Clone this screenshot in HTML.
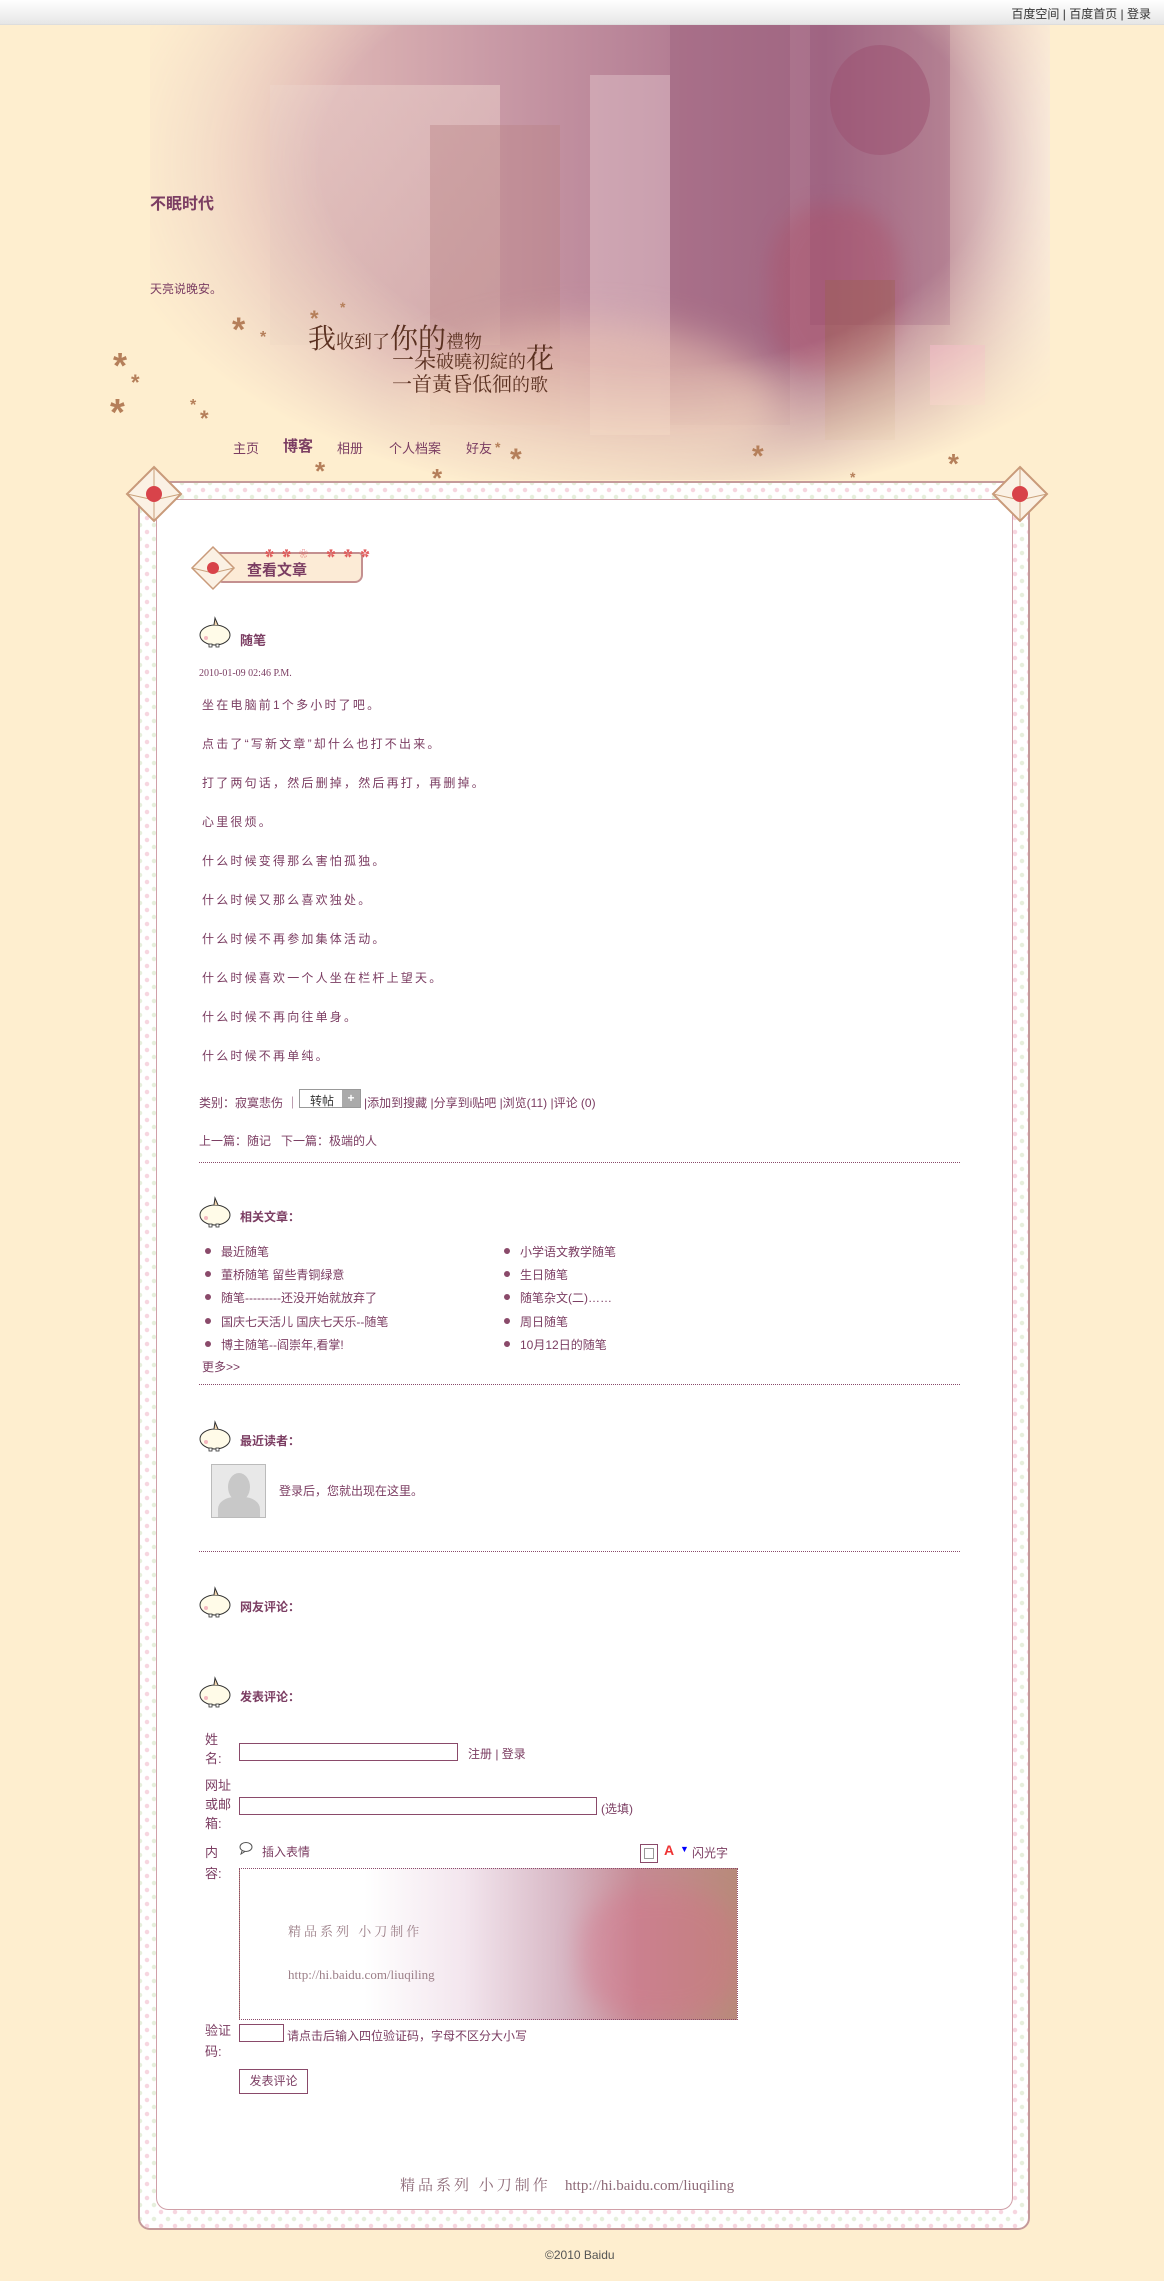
<!DOCTYPE html>
<html><head><meta charset="utf-8">
<style>
*{margin:0;padding:0;box-sizing:border-box}
body{width:1164px;height:2281px;background:#feeecf;position:relative;overflow:hidden;font-family:"Liberation Sans","Noto Sans CJK SC",sans-serif;color:#7b3d62;font-size:12px}
.a{position:absolute;white-space:nowrap}
#top{position:absolute;left:0;top:0;width:1164px;height:25px;background:linear-gradient(#fff,#e6e6e6);border-bottom:1px solid #ddd}
.star{position:absolute;color:#b57f5a;font-family:"Liberation Sans",sans-serif;font-weight:bold;line-height:1}
.hd{position:absolute;font-weight:bold;font-size:12px;color:#7b3d62}
.p{position:absolute;left:202px;font-size:12px;letter-spacing:2.2px;color:#7b3d62}
.dot{position:absolute;left:199px;width:761px;border-top:1px dotted #8a4a6a}
.li{position:absolute;font-size:12px}
.li:before{content:"";position:absolute;left:-16px;top:5px;width:6px;height:6px;border-radius:50%;background:#8a4a6a}
input.in{position:absolute;border:1px solid #8a4a6a;background:#fff;height:18px}
#art{position:absolute;left:150px;top:25px;width:900px;height:455px;
background:linear-gradient(90deg,#f2d9c8 0%,#e0b9b6 18%,#c99aa6 38%,#b47e94 58%,#a8708a 75%,#c497a0 88%,#f6e6dc 100%);
-webkit-mask-image:radial-gradient(ellipse 62% 75% at 56% 30%,#000 60%,transparent 100%);
mask-image:radial-gradient(ellipse 62% 75% at 56% 30%,#000 60%,transparent 100%)}
.pl{position:absolute;white-space:nowrap;font-family:'Liberation Serif','Noto Serif CJK SC',serif;color:#5a3020;line-height:1}
</style></head><body>
<div id="top"></div>
<div class="a" style="right:13px;top:5px;font-size:12px;color:#333">百度空间 | 百度首页 | 登录</div>

<div id="art">
<div class="a" style="left:120px;top:60px;width:230px;height:260px;background:linear-gradient(#e6c9c6,#d7b3b0);opacity:.6"></div>
<div class="a" style="left:280px;top:100px;width:130px;height:300px;background:#b98384;opacity:.4"></div>
<div class="a" style="left:440px;top:50px;width:80px;height:360px;background:#e5c8cf;opacity:.45"></div>
<div class="a" style="left:520px;top:0;width:120px;height:400px;background:#8e5070;opacity:.3"></div>
<div class="a" style="left:660px;top:0;width:140px;height:300px;background:#8c4a70;opacity:.3"></div>
<div class="a" style="left:680px;top:20px;width:100px;height:110px;border-radius:50%;background:#9c4f70;opacity:.5"></div>
<div class="a" style="left:250px;top:300px;width:380px;height:160px;border-radius:50%;background:#eec8b4;opacity:.6;filter:blur(20px)"></div>
<div class="a" style="left:620px;top:180px;width:130px;height:170px;border-radius:40%;background:#b14c63;opacity:.35;filter:blur(10px)"></div>
<div class="a" style="left:675px;top:255px;width:70px;height:160px;background:#9a6250;opacity:.4"></div>
<div class="a" style="left:780px;top:320px;width:55px;height:60px;background:#e4a0be;opacity:.7"></div>
</div>

<div class="a" style="left:150px;top:190px;font-size:16px;font-weight:bold;color:#7b3d62">不眠时代</div>
<div class="a" style="left:150px;top:280px;font-size:12px;color:#7b3d62">天亮说晚安。</div>
<div class="pl" style="left:308px;top:326px"><span style="font-size:28px">我</span><span style="font-size:18px">收到了</span><span style="font-size:28px">你的</span><span style="font-size:18px">禮物</span></div>
<div class="pl" style="left:392px;top:346px"><span style="font-size:22px">一朵</span><span style="font-size:18px">破曉初綻的</span><span style="font-size:28px">花</span></div>
<div class="pl" style="left:392px;top:375px;font-size:20px">一首黃昏低徊<span style="font-size:18px">的歌</span></div>

<div class="a" style="left:233px;top:438px;font-size:13px">主页</div>
<div class="a" style="left:283px;top:435px;font-size:15px;font-weight:bold">博客</div>
<div class="a" style="left:337px;top:438px;font-size:13px">相册</div>
<div class="a" style="left:389px;top:438px;font-size:13px">个人档案</div>
<div class="a" style="left:466px;top:438px;font-size:13px">好友</div>

<div class="star" style="left:232px;top:313px;font-size:34px">*</div>
<div class="star" style="left:260px;top:330px;font-size:16px">*</div>
<div class="star" style="left:113px;top:348px;font-size:36px">*</div>
<div class="star" style="left:131px;top:372px;font-size:22px">*</div>
<div class="star" style="left:110px;top:394px;font-size:38px">*</div>
<div class="star" style="left:190px;top:398px;font-size:16px">*</div>
<div class="star" style="left:200px;top:408px;font-size:22px">*</div>
<div class="star" style="left:310px;top:308px;font-size:22px">*</div>
<div class="star" style="left:340px;top:300px;font-size:14px">*</div>
<div class="star" style="left:510px;top:445px;font-size:30px">*</div>
<div class="star" style="left:495px;top:440px;font-size:14px">*</div>
<div class="star" style="left:315px;top:458px;font-size:26px">*</div>
<div class="star" style="left:432px;top:465px;font-size:26px">*</div>
<div class="star" style="left:345px;top:497px;font-size:20px">*</div>
<div class="star" style="left:752px;top:442px;font-size:30px">*</div>
<div class="star" style="left:850px;top:470px;font-size:14px">*</div>
<div class="star" style="left:840px;top:480px;font-size:22px">*</div>
<div class="star" style="left:948px;top:450px;font-size:28px">*</div>
<div class="star" style="left:922px;top:490px;font-size:18px">*</div>

<div class="a" style="left:138px;top:481px;width:892px;height:1749px;border:2px solid #c59a9a;border-radius:0 0 12px 12px;background:#fff;background-image:radial-gradient(circle,#f7d6e0 2px,transparent 2.5px),radial-gradient(circle,#e6efdc 2px,transparent 2.5px);background-size:14px 14px;background-position:0 0,7px 7px"></div>
<div class="a" style="left:156px;top:499px;width:857px;height:1711px;border:1px solid #d0a0a8;border-radius:0 0 12px 12px;background:#fff"></div>
<svg class="a" style="left:124px;top:464px" width="60" height="60" viewBox="0 0 60 60"><path d="M30 3 L57 30 L30 57 L3 30Z" fill="#fbf1e4" stroke="#c99a7a" stroke-width="2"/><path d="M3 30 L30 36 L57 30 M30 3 L30 57" stroke="#c9a07a" fill="none"/><circle cx="30" cy="30" r="8" fill="#d8434a"/></svg>
<svg class="a" style="left:990px;top:464px" width="60" height="60" viewBox="0 0 60 60"><path d="M30 3 L57 30 L30 57 L3 30Z" fill="#fbf1e4" stroke="#c99a7a" stroke-width="2"/><path d="M3 30 L30 36 L57 30 M30 3 L30 57" stroke="#c9a07a" fill="none"/><circle cx="30" cy="30" r="8" fill="#d8434a"/></svg>

<div class="a" style="left:215px;top:552px;width:148px;height:31px;border:2px solid #c49090;border-radius:0 4px 8px 8px;background:#fcebd6"></div>
<svg class="a" style="left:190px;top:545px" width="46" height="46" viewBox="0 0 46 46"><path d="M23 2 L44 23 L23 44 L2 23Z" fill="#fbf1e4" stroke="#c99a7a" stroke-width="1.5"/><path d="M2 23 L23 28 L44 23" stroke="#c9a07a" fill="none"/><circle cx="23" cy="23" r="6" fill="#d8434a"/></svg>
<div class="a" style="left:265px;top:547px;font-size:9px;color:#e05a5a;letter-spacing:8px">✿✿❀ ✿✿✿</div>
<div class="a" style="left:247px;top:559px;font-size:15px;font-weight:bold;color:#7b3d62">查看文章</div>

<svg width="0" height="0" style="position:absolute"><defs><g id="rb"><ellipse cx="16" cy="19" rx="15" ry="10" fill="#fffbe8" stroke="#333" stroke-width="1"/><path d="M15 9 L16 2 L19 9" fill="#f4d7b0" stroke="#333" stroke-width="1"/><circle cx="7" cy="22" r="2" fill="#f5b8c0"/><rect x="10" y="28" width="3" height="3" fill="#fff" stroke="#333" stroke-width=".8"/><rect x="17" y="28" width="3" height="3" fill="#fff" stroke="#333" stroke-width=".8"/></g></defs></svg>
<svg class="a" style="left:199px;top:616px" width="34" height="34"><use href="#rb"/></svg>
<div class="hd" style="left:240px;top:630px;font-size:13px">随笔</div>
<div class="a" style="left:199px;top:668px;font-size:10px;font-family:'Liberation Serif',serif">2010-01-09 02:46 P.M.</div>

<div class="p" style="top:696px">坐在电脑前1个多小时了吧。</div>
<div class="p" style="top:735px">点击了“写新文章”却什么也打不出来。</div>
<div class="p" style="top:774px">打了两句话，然后删掉，然后再打，再删掉。</div>
<div class="p" style="top:813px">心里很烦。</div>
<div class="p" style="top:852px">什么时候变得那么害怕孤独。</div>
<div class="p" style="top:891px">什么时候又那么喜欢独处。</div>
<div class="p" style="top:930px">什么时候不再参加集体活动。</div>
<div class="p" style="top:969px">什么时候喜欢一个人坐在栏杆上望天。</div>
<div class="p" style="top:1008px">什么时候不再向往单身。</div>
<div class="p" style="top:1047px">什么时候不再单纯。</div>

<div class="a" style="left:199px;top:1094px">类别：寂寞悲伤 ｜</div>
<div class="a" style="left:299px;top:1089px;width:62px;height:19px;border:1px solid #999;background:#fff;font-size:12px;color:#333;padding:2px 0 0 10px">转帖<span style="position:absolute;right:0;top:0;width:18px;height:17px;background:#aaa;color:#fff;text-align:center;font-weight:bold;line-height:17px">+</span></div>
<div class="a" style="left:364px;top:1094px">|添加到搜藏 |分享到i贴吧 |浏览(11) |评论 (0)</div>
<div class="a" style="left:199px;top:1132px">上一篇：随记 &nbsp; 下一篇：极端的人</div>
<div class="dot" style="top:1162px"></div>

<svg class="a" style="left:199px;top:1196px" width="34" height="34"><use href="#rb"/></svg>
<div class="hd" style="left:240px;top:1208px">相关文章：</div>
<div class="li" style="left:221px;top:1243px">最近随笔</div>
<div class="li" style="left:221px;top:1266px">董桥随笔 留些青铜绿意</div>
<div class="li" style="left:221px;top:1289px">随笔---------还没开始就放弃了</div>
<div class="li" style="left:221px;top:1313px">国庆七天活儿 国庆七天乐--随笔</div>
<div class="li" style="left:221px;top:1336px">博主随笔--阎崇年,看掌!</div>
<div class="li" style="left:520px;top:1243px">小学语文教学随笔</div>
<div class="li" style="left:520px;top:1266px">生日随笔</div>
<div class="li" style="left:520px;top:1289px">随笔杂文(二)……</div>
<div class="li" style="left:520px;top:1313px">周日随笔</div>
<div class="li" style="left:520px;top:1336px">10月12日的随笔</div>
<div class="a" style="left:202px;top:1358px">更多>></div>
<div class="dot" style="top:1384px"></div>

<svg class="a" style="left:199px;top:1420px" width="34" height="34"><use href="#rb"/></svg>
<div class="hd" style="left:240px;top:1432px">最近读者：</div>
<div class="a" style="left:211px;top:1464px;width:55px;height:54px;border:1px solid #bbb;background:#e8e8e8;overflow:hidden"><div style="position:absolute;left:16px;top:8px;width:22px;height:28px;border-radius:50%;background:#c8c8c8"></div><div style="position:absolute;left:6px;top:32px;width:42px;height:30px;border-radius:40% 40% 0 0;background:#c8c8c8"></div></div>
<div class="a" style="left:279px;top:1482px">登录后，您就出现在这里。</div>
<div class="dot" style="top:1551px"></div>

<svg class="a" style="left:199px;top:1586px" width="34" height="34"><use href="#rb"/></svg>
<div class="hd" style="left:240px;top:1598px">网友评论：</div>
<svg class="a" style="left:199px;top:1676px" width="34" height="34"><use href="#rb"/></svg>
<div class="hd" style="left:240px;top:1688px">发表评论：</div>

<div class="a" style="left:205px;top:1730px;font-size:13px;line-height:19px;white-space:normal;width:20px">姓名:</div>
<input class="in" style="left:239px;top:1743px;width:219px">
<div class="a" style="left:468px;top:1745px">注册 | 登录</div>
<div class="a" style="left:205px;top:1776px;font-size:13px;line-height:19px;white-space:normal;width:28px">网址或邮箱:</div>
<input class="in" style="left:239px;top:1797px;width:358px">
<div class="a" style="left:601px;top:1800px">(选填)</div>
<div class="a" style="left:205px;top:1842px;font-size:13px;line-height:21px;white-space:normal;width:18px">内容:</div>
<svg class="a" style="left:238px;top:1841px" width="16" height="14" viewBox="0 0 16 14"><ellipse cx="8" cy="6" rx="6" ry="4.5" fill="none" stroke="#555"/><path d="M4 10 L3 13 L7 10.5" fill="none" stroke="#555"/></svg>
<div class="a" style="left:262px;top:1843px">插入表情</div>
<div class="a" style="left:640px;top:1844px;width:18px;height:19px;border:1px solid #8a4a6a;background:#fff"><div style="margin:3px;width:10px;height:11px;border:1px solid #999"></div></div>
<div class="a" style="left:664px;top:1842px;font-weight:bold;font-size:14px;color:#e33">A</div>
<div class="a" style="left:680px;top:1844px;color:#00f;font-size:9px">▼</div>
<div class="a" style="left:692px;top:1844px">闪光字</div>
<div class="a" style="left:239px;top:1868px;width:499px;height:152px;border:1px dotted #8a4a6a;background:linear-gradient(90deg,#fff 0%,#fff 25%,#f3e6ee 45%,#d7b7c4 65%,#c68a94 80%,#b88a7a 100%);overflow:hidden">
<div style="position:absolute;left:340px;top:20px;width:160px;height:130px;border-radius:40%;background:#d66f86;opacity:.35;filter:blur(12px)"></div>
<div style="position:absolute;left:48px;top:52px;color:#9c7f88;font-family:'Liberation Serif','Noto Serif CJK SC',serif;font-size:13px;letter-spacing:3px">精品系列 小刀制作</div>
<div style="position:absolute;left:48px;top:98px;color:#9c7f88;font-family:'Liberation Serif',serif;font-size:13px">http://hi.baidu.com/liuqiling</div>
</div>
<div class="a" style="left:205px;top:2020px;font-size:13px;line-height:21px;white-space:normal;width:28px">验证码:</div>
<input class="in" style="left:239px;top:2024px;width:45px">
<div class="a" style="left:287px;top:2027px">请点击后输入四位验证码，字母不区分大小写</div>
<div class="a" style="left:239px;top:2069px;width:69px;height:25px;border:1px solid #8a4a6a;background:#fff;text-align:center;line-height:22px">发表评论</div>

<div class="a" style="left:400px;top:2174px;color:#8e6b78;font-family:'Liberation Serif','Noto Serif CJK SC',serif;font-size:15px;letter-spacing:3px">精品系列 小刀制作 <span style="letter-spacing:0">&nbsp; http://hi.baidu.com/liuqiling</span></div>
<div class="a" style="left:545px;top:2248px;color:#555;font-size:12px">©2010 Baidu</div>
</body></html>
